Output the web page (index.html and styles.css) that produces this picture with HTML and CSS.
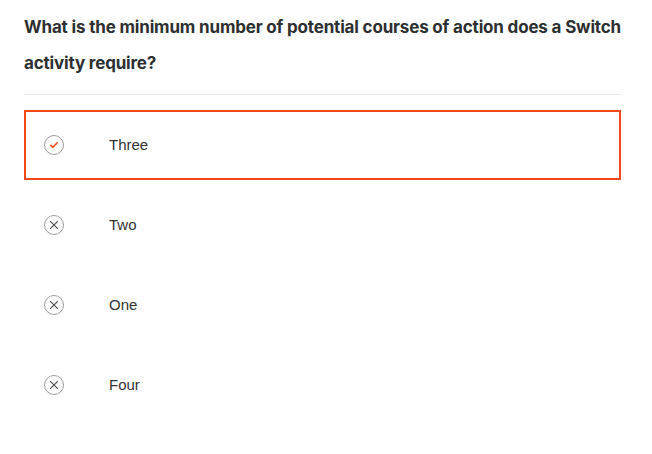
FILE: index.html
```html
<!DOCTYPE html>
<html>
<head>
<meta charset="utf-8">
<link rel="stylesheet" href="styles.css">
</head>
<body>
<div class="quiz">
  <h1 class="question">What is the minimum number of potential courses of action does a Switch activity require?</h1>
  <div class="divider"></div>
  <ul class="options">
    <li class="option selected">
      <span class="icon"><svg width="20" height="20" viewBox="0 0 20 20"><circle cx="10" cy="10" r="9.5" fill="none" stroke="#9a9a9a" stroke-width="1"/><path d="M6.8 10.3 L9 12.3 L13.2 7.8" fill="none" stroke="#f04a1a" stroke-width="1.6" stroke-linecap="round" stroke-linejoin="round"/></svg></span>
      <span class="label">Three</span>
    </li>
    <li class="option">
      <span class="icon"><svg width="20" height="20" viewBox="0 0 20 20"><circle cx="10" cy="10" r="9.5" fill="none" stroke="#9a9a9a" stroke-width="1"/><path d="M6.6 6.6 L13.4 13.4 M13.4 6.6 L6.6 13.4" fill="none" stroke="#555" stroke-width="1.3" stroke-linecap="round"/></svg></span>
      <span class="label">Two</span>
    </li>
    <li class="option">
      <span class="icon"><svg width="20" height="20" viewBox="0 0 20 20"><circle cx="10" cy="10" r="9.5" fill="none" stroke="#9a9a9a" stroke-width="1"/><path d="M6.6 6.6 L13.4 13.4 M13.4 6.6 L6.6 13.4" fill="none" stroke="#555" stroke-width="1.3" stroke-linecap="round"/></svg></span>
      <span class="label">One</span>
    </li>
    <li class="option">
      <span class="icon"><svg width="20" height="20" viewBox="0 0 20 20"><circle cx="10" cy="10" r="9.5" fill="none" stroke="#9a9a9a" stroke-width="1"/><path d="M6.6 6.6 L13.4 13.4 M13.4 6.6 L6.6 13.4" fill="none" stroke="#555" stroke-width="1.3" stroke-linecap="round"/></svg></span>
      <span class="label">Four</span>
    </li>
  </ul>
</div>
</body>
</html>
```
FILE: styles.css
```css
html, body {
  margin: 0;
  padding: 0;
  background: #fff;
}
.quiz {
  width: 597px;
  padding: 9px 0 0 24px;
  font-family: Inter, "Open Sans", sans-serif;
}
.question {
  margin: 0;
  font-size: 17px;
  font-weight: 700;
  line-height: 36px;
  color: #2d2f31;
  letter-spacing: -0.17px;
}
.divider {
  margin-top: 13px;
  height: 1px;
  background: #e8e8e8;
}
.options {
  list-style: none;
  margin: 15px 0 0;
  padding: 0;
  display: flex;
  flex-direction: column;
  gap: 10px;
}
.option {
  box-sizing: border-box;
  height: 70px;
  border: 2px solid transparent;
  display: flex;
  align-items: center;
  padding-left: 18px;
}
.option.selected {
  border-color: #f04a1a;
}
.icon {
  width: 20px;
  height: 20px;
  display: flex;
}
.label {
  margin-left: 45px;
  padding-bottom: 1px;
  font-family: "Liberation Sans", Arial, sans-serif;
  font-size: 15px;
  color: #333;
}
```
